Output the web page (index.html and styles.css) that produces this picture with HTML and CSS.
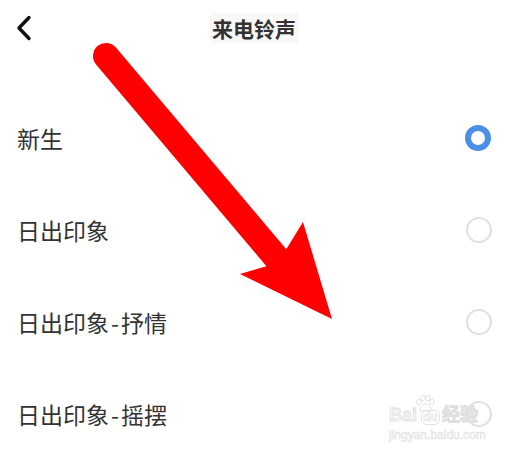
FILE: index.html
```html
<!DOCTYPE html>
<html lang="zh-CN">
<head>
    <meta charset="UTF-8">
    <meta name="viewport" content="width=device-width, initial-scale=1.0">
    <title>来电铃声</title>
    <link rel="stylesheet" href="styles.css">
</head>
<body>

    <div class="header">
        <div class="back">
            <svg width="16" height="26" viewBox="0 0 16 26">
                <path d="M13 2.5 L3 13 L13 23.5" fill="none" stroke="#111" stroke-width="3.4" stroke-linecap="round" stroke-linejoin="round"/>
            </svg>
        </div>
        <div class="title">来电铃声</div>
        <div></div>
    </div>

    <div class="list">
        <div class="row">
            <span class="name">新生</span>
            <span class="radio checked"></span>
        </div>
        <div class="row">
            <span class="name">日出印象</span>
            <span class="radio"></span>
        </div>
        <div class="row">
            <span class="name">日出印象<span class="dash">-</span>抒情</span>
            <span class="radio"></span>
        </div>
        <div class="row">
            <span class="name">日出印象<span class="dash">-</span>摇摆</span>
            <span class="radio"></span>
        </div>
    </div>

    <!-- red arrow drawn over the screenshot -->
    <svg class="arrow" width="508" height="456" viewBox="0 0 508 456">
        <line x1="106" y1="56" x2="280" y2="262" stroke="#fe0000" stroke-width="26" stroke-linecap="round"/>
        <polygon points="240,274 332,319 303,222 287,248 267,266" fill="#fe0000"/>
    </svg>

    <div class="watermark">
        <div class="wm-logo">
            <span>Bai</span>
            <svg width="20" height="18" viewBox="0 0 20 18">
                <g fill="none" stroke="#e2e2e2" stroke-width="1">
                    <ellipse cx="4" cy="7" rx="2.2" ry="3"/>
                    <ellipse cx="8" cy="3" rx="2.2" ry="2.8"/>
                    <ellipse cx="13" cy="3" rx="2.2" ry="2.8"/>
                    <ellipse cx="17" cy="7" rx="2.2" ry="3"/>
                    <path d="M5 16 C5 11 8 9 10.5 9 C13 9 16 11 16 16 Z"/>
                </g>
            </svg>
            <span class="du">du</span>
            <span>经验</span>
        </div>
        <div class="wm-url">jingyan.baidu.com</div>
    </div>

</body>
</html>
```

FILE: styles.css
```css
body {
    margin: 0;
    width: 508px;
    height: 456px;
    overflow: hidden;
    background: #fff;
    font-family: "Noto Sans CJK SC", "Noto Sans", sans-serif;
    color: #333;
    position: relative;
}

.header {
    height: 56px;
    display: grid;
    grid-template-columns: 1fr auto 1fr;
    align-items: center;
}

.back {
    padding-left: 16px;
    display: flex;
    align-items: center;
}

.title {
    font-size: 21px;
    font-weight: bold;
    color: #333;
    background: #f8f8f8;
    padding: 0 2px;
    line-height: 30px;
}

.list {
    margin-top: 36px;
}

.row {
    height: 92px;
    display: flex;
    align-items: center;
    justify-content: space-between;
    padding: 0 16px 0 17px;
}

.name {
    font-size: 23px;
    color: #333;
}

.dash {
    padding: 0 2px;
}

.radio {
    width: 22px;
    height: 22px;
    border: 2px solid #e0e0e0;
    border-radius: 50%;
}

.radio.checked {
    width: 14px;
    height: 14px;
    border: 6px solid #4a90e6;
    margin-right: 1px;
}

.arrow {
    position: absolute;
    top: 0;
    left: 0;
    pointer-events: none;
}

.watermark {
    position: absolute;
    left: 389px;
    top: 395px;
    color: #f7f7f7;
    -webkit-text-stroke: 0.8px #e0e0e0;
    font-family: "Liberation Sans", sans-serif;
}

.wm-logo {
    display: flex;
    align-items: flex-end;
    font-size: 18px;
    font-weight: bold;
    line-height: 20px;
}

.wm-logo svg {
    margin: 0 -14px 12px -2px;
}

.du {
    font-size: 12px;
    border: 1px solid #e2e2e2;
    border-radius: 6px;
    padding: 0 1px;
    line-height: 13px;
    margin-right: 2px;
    -webkit-text-stroke: 0.5px #e0e0e0;
}

.wm-url {
    font-size: 12px;
    margin-top: 3px;
    -webkit-text-stroke: 0.5px #e0e0e0;
}
```
